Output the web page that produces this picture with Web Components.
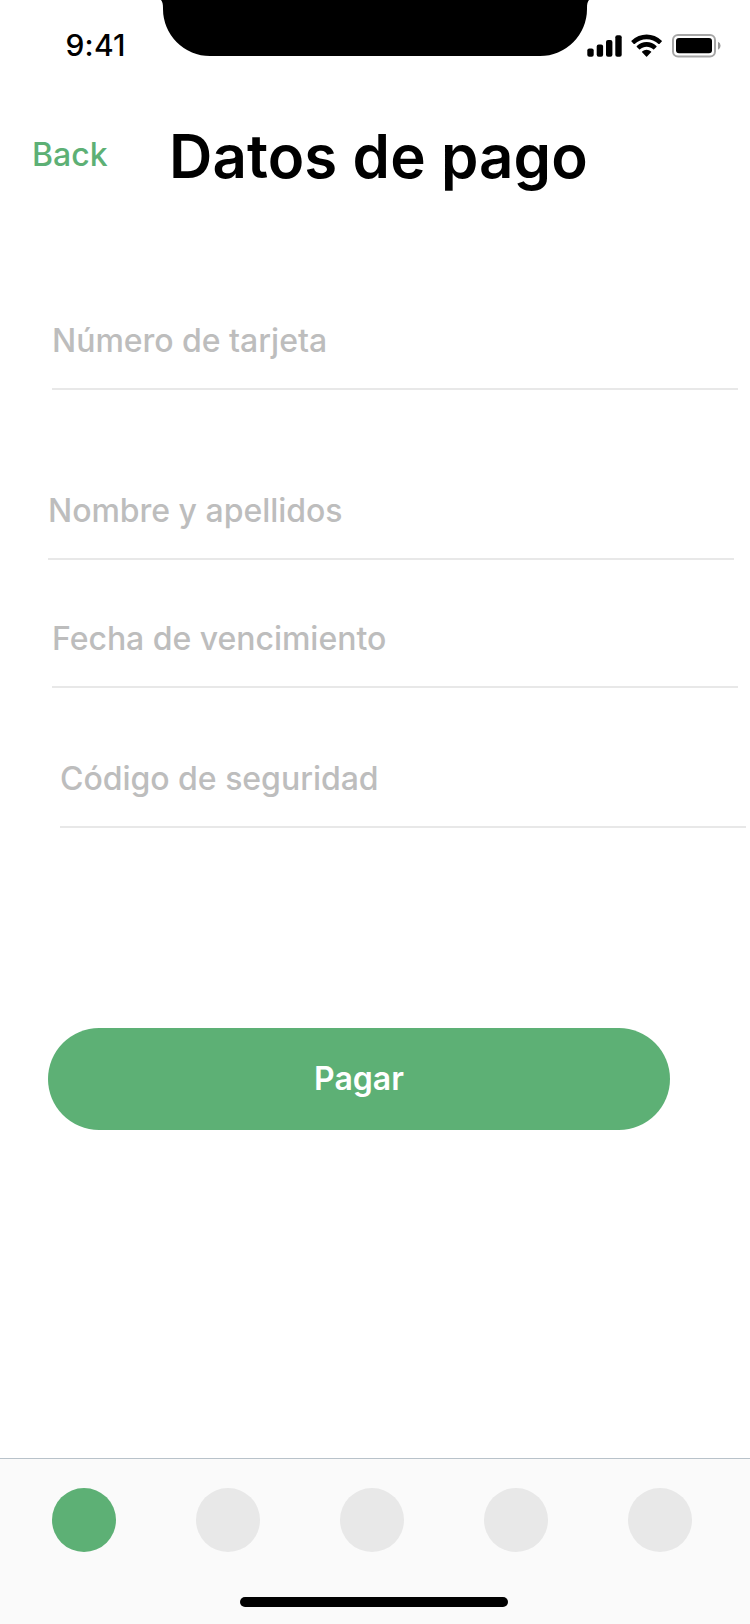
<!DOCTYPE html>
<html lang="es">
<head>
<meta charset="utf-8">
<title>Datos de pago</title>
<style>
html, body { margin: 0; padding: 0; background: #fff; }
body { width: 750px; height: 1624px; overflow: hidden; font-family: Inter, "Liberation Sans", sans-serif; --green: #5db075; }
</style>
</head>
<body>
<payment-screen></payment-screen>
<script>
const define = (name, html) => {
  const template = document.createElement('template');
  template.innerHTML = html;
  customElements.define(name, class extends HTMLElement {
    constructor() {
      super();
      this.attachShadow({ mode: 'open' }).append(template.content.cloneNode(true));
    }
  });
};

define('status-bar', `
<style>
:host { display: grid; grid-template-columns: 163px 424px 163px; height: 88px; flex: none; }
.time { font-size: 30px; font-weight: 550; line-height: 36px; letter-spacing: .2px; padding: 27px 0 0 65.500px; white-space: nowrap; }
svg { display: block; }
</style>
<div class="time">9:41</div>
<svg width="424" height="56" viewBox="0 0 424 56" overflow="visible"><path d="M-2 0C-.5 2 0 4 0 8V9A47 47 0 0 0 47 56H377A47 47 0 0 0 424 9V8C424 4 424.500 2 426 0Z"/></svg>
<svg width="163" height="88" viewBox="587 0 163 88">
  <rect x="587.300" y="48.400" width="6.400" height="8.300" rx="2"/>
  <rect x="596.700" y="44.400" width="6.400" height="12.300" rx="2"/>
  <rect x="606" y="40" width="6.400" height="16.700" rx="2"/>
  <rect x="615.300" y="35.300" width="6.400" height="21.400" rx="2"/>
  <path transform="translate(631.300 34.600) scale(2)" d="M7.660 2.280c2.220 0 4.360.850 5.970 2.380.120.120.320.120.440 0l1.160-1.170c.060-.060.100-.140.100-.230 0-.090-.040-.170-.100-.230-4.230-4.050-10.900-4.050-15.140 0-.060.060-.100.140-.100.230s.030.170.100.230l1.160 1.170c.120.120.310.120.440 0 1.610-1.530 3.750-2.380 5.970-2.380zm0 3.800c1.220 0 2.400.450 3.300 1.270.120.120.320.120.440 0l1.160-1.170a.330.330 0 0 0 0-.470 7.130 7.130 0 0 0-9.800 0 .330.330 0 0 0 0 .470l1.160 1.170c.120.120.320.120.440 0 .900-.820 2.080-1.270 3.300-1.270zm2.320 2.560a.320.320 0 0 1-.100.240l-2.010 2.020a.320.320 0 0 1-.460 0L5.400 8.880a.320.320 0 0 1 .010-.470 3.450 3.450 0 0 1 4.480 0c.060.060.100.150.100.230z"/>
  <rect x="673" y="35" width="42" height="21.400" rx="5" fill="none" stroke="#a6a6a6" stroke-width="2"/>
  <rect x="676" y="38" width="36" height="15.300" rx="3"/>
  <path d="M718 41.700a4.400 4.400 0 0 1 0 8z" fill="#999"/>
</svg>`);

define('nav-header', `
<style>
:host { display: flex; align-items: center; height: 144px; padding: 0 0 8px 32px; box-sizing: border-box; flex: none; white-space: nowrap; }
.back { font-size: 32px; font-weight: 500; line-height: 40px; color: var(--green); width: 137px; padding-bottom: 2px; }
h1 { margin: 0; font-size: 60px; font-weight: 600; line-height: 72px; letter-spacing: .1px; color: #000; }
</style>
<div class="back"><slot name="back"></slot></div>
<h1><slot></slot></h1>`);

define('form-field', `
<style>
:host { display: block; width: 686px; height: 100px; box-sizing: border-box; border-bottom: 2px solid #e8e8e8; padding-top: 31px; font-size: 32px; font-weight: 500; line-height: 39px; letter-spacing: -.03px; color: #bdbdbd; white-space: nowrap; }
</style>
<slot></slot>`);

define('pay-button', `
<style>
:host { display: flex; width: 622px; height: 102px; box-sizing: border-box; padding-bottom: 2px; border-radius: 51px; background: var(--green); align-items: center; justify-content: center; color: #fff; font-size: 32px; font-weight: 600; line-height: 39px; }
</style>
<slot></slot>`);

define('tab-dot', `
<style>
:host { display: block; width: 64px; height: 64px; border-radius: 50%; background: #e8e8e8; }
:host([active]) { background: var(--green); }
</style>`);

define('tab-bar', `
<style>
:host { display: flex; flex-direction: column; align-items: center; height: 166px; box-sizing: border-box; border-top: 1px solid #b8c2ca; background: #fafafa; margin-top: auto; flex: none; }
.tabs { display: flex; width: 640px; justify-content: space-between; margin: 29px 6px 0 0; }
.home { width: 268px; height: 10px; border-radius: 5px; background: #000; margin: 45px 2px 0 0; }
</style>
<div class="tabs"><slot></slot></div>
<div class="home"></div>`);

define('payment-screen', `
<style>
:host { display: flex; flex-direction: column; width: 750px; height: 1624px; background: #fff; }
.form { display: flex; flex-direction: column; padding-top: 58px; }
.card { margin-left: 52px; }
.name { margin: 70px 0 0 48px; }
.expiry { margin: 28px 0 0 52px; }
.code { margin: 40px 0 0 60px; }
pay-button { margin: 200px 0 0 48px; }
</style>
<status-bar></status-bar>
<nav-header><span slot="back">Back</span>Datos de pago</nav-header>
<div class="form">
  <form-field class="card">Número de tarjeta</form-field>
  <form-field class="name">Nombre y apellidos</form-field>
  <form-field class="expiry">Fecha de vencimiento</form-field>
  <form-field class="code">Código de seguridad</form-field>
  <pay-button>Pagar</pay-button>
</div>
<tab-bar><tab-dot active></tab-dot><tab-dot></tab-dot><tab-dot></tab-dot><tab-dot></tab-dot><tab-dot></tab-dot></tab-bar>`);
</script>
</body>
</html>
